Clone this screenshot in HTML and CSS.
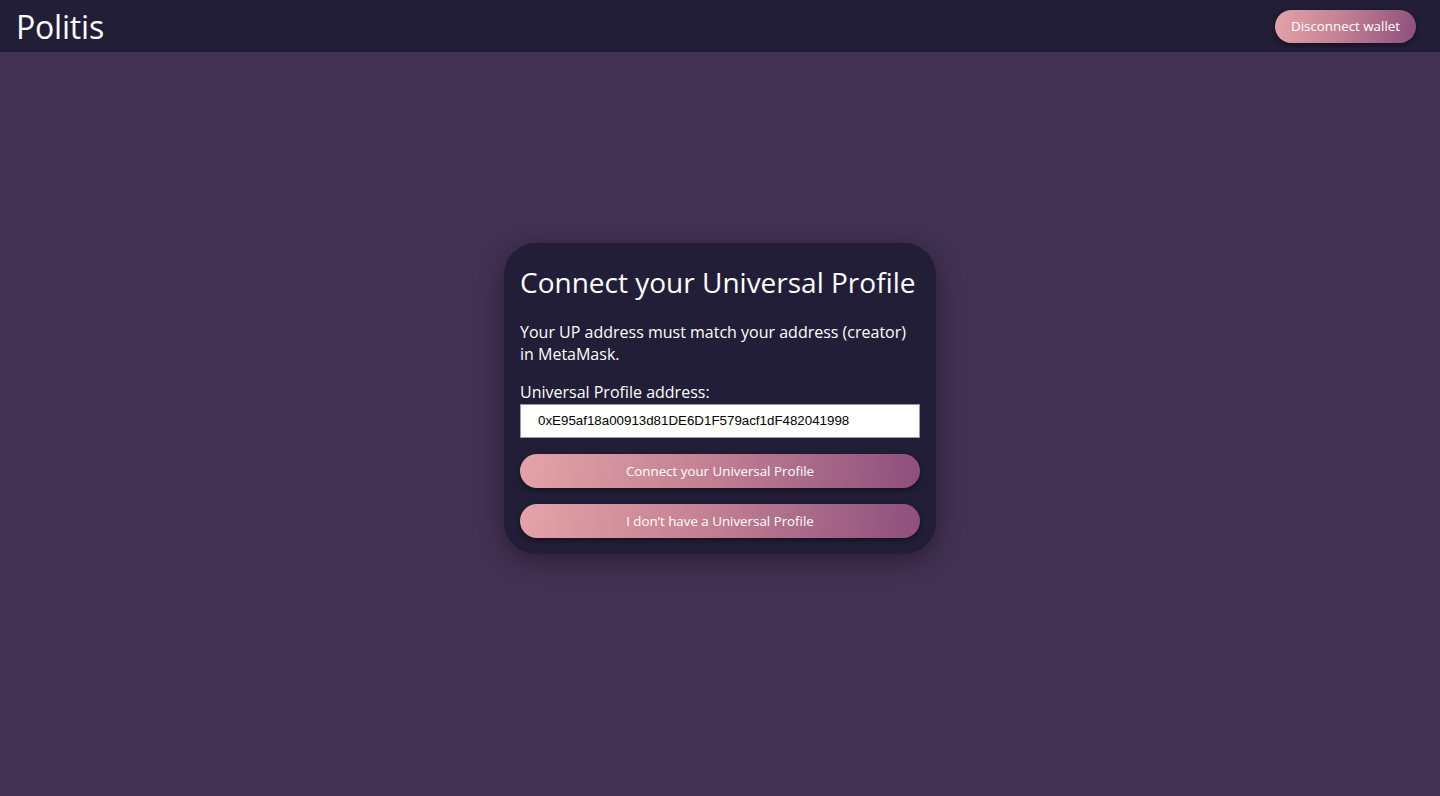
FILE: index.html
```html
<!DOCTYPE html>
<html lang="en">
<head>
<meta charset="utf-8">
<title>Politis</title>
<link rel="stylesheet" href="styles.css">
</head>
<body>
<header class="topbar">
  <div class="brand">Politis</div>
  <button class="btn btn-pill">Disconnect wallet</button>
</header>
<main class="main">
  <section class="card">
    <h1 class="card-title">Connect your Universal Profile</h1>
    <p class="card-text">Your UP address must match your address (creator) in MetaMask.</p>
    <label class="field-label" for="up">Universal Profile address:</label>
    <input id="up" class="field-input" type="text" value="0xE95af18a00913d81DE6D1F579acf1dF482041998">
    <button class="btn btn-wide">Connect your Universal Profile</button>
    <button class="btn btn-wide">I don’t have a Universal Profile</button>
  </section>
</main>
</body>
</html>
```
FILE: styles.css
```css
* { box-sizing: border-box; }
html, body { margin: 0; padding: 0; }
body {
  background: #413152;
  font-family: "Open Sans", "Noto Sans", sans-serif;
  color: #ffffff;
  min-height: 100vh;
}
.topbar {
  height: 52px;
  background: #221e37;
  display: flex;
  align-items: center;
  justify-content: space-between;
  padding: 0 24px 0 16px;
}
.brand {
  font-size: 32px;
  line-height: 1;
  font-weight: 400;
  letter-spacing: -0.2px;
  margin-top: 2px;
}
.btn {
  border: none;
  color: #ffffff;
  font-family: "Open Sans", "Noto Sans", sans-serif;
  font-size: 13.33px;
  font-weight: 500;
  cursor: pointer;
  background: linear-gradient(100deg, #e4a3a8 0%, #c48293 45%, #8d4f7d 100%);
  border-radius: 999px;
  box-shadow: 0 2px 6px rgba(0, 0, 0, 0.45);
}
.btn-pill {
  height: 33px;
  padding: 0 16px;
}
.main {
  height: calc(100vh - 52px);
  padding-bottom: 52px;
  display: flex;
  align-items: center;
  justify-content: center;
}
.card {
  width: 432px;
  background: #221e37;
  border-radius: 32px;
  padding: 16px;
  display: flex;
  flex-direction: column;
  box-shadow: 0 6px 24px rgba(0, 0, 0, 0.35);
}
.card-title {
  margin: 3px 0 0;
  font-size: 28px;
  line-height: 40px;
  font-weight: 400;
}
.card-text {
  margin: 19px 0 0;
  font-size: 16px;
  line-height: 22px;
}
.field-label {
  margin-top: 16px;
  font-size: 16px;
  line-height: 22px;
}
.field-input {
  margin-top: 1px;
  width: 400px;
  height: 34px;
  border: 1px solid #9a9a9a;
  background: #ffffff;
  font-family: "Liberation Sans", Arial, sans-serif;
  font-size: 13.33px;
  color: #000000;
  padding: 0 17px;
}
.btn-wide {
  margin-top: 16px;
  width: 400px;
  height: 34px;
}
```
